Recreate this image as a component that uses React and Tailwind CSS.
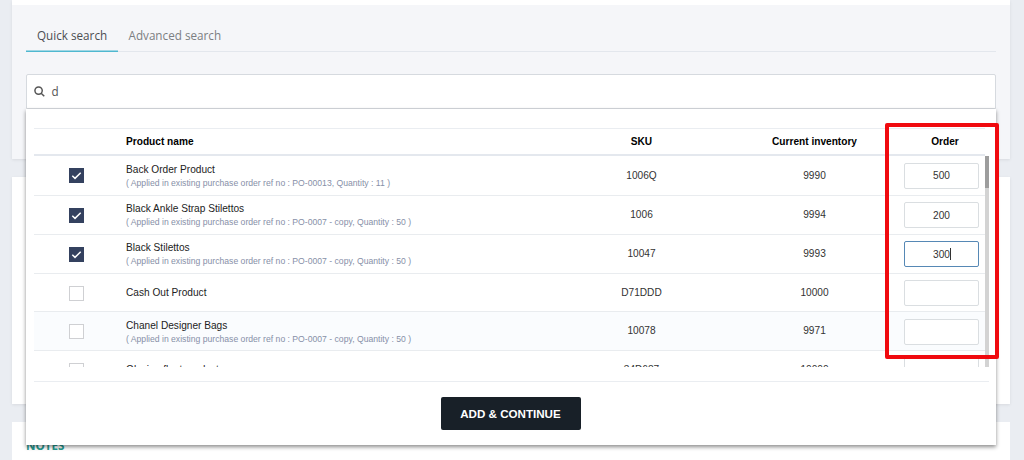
const products = [
  { name: "Back Order Product", note: "( Applied in existing purchase order ref no : PO-00013, Quantity : 11 )", sku: "1006Q", stock: "9990", order: "500", checked: true, size: "h-[39.5px]" },
  { name: "Black Ankle Strap Stilettos", note: "( Applied in existing purchase order ref no : PO-0007 - copy, Quantity : 50 )", sku: "1006", stock: "9994", order: "200", checked: true, size: "h-[39.25px]" },
  { name: "Black Stilettos", note: "( Applied in existing purchase order ref no : PO-0007 - copy, Quantity : 50 )", sku: "10047", stock: "9993", order: "300", checked: true, focused: true, size: "h-[39.25px]" },
  { name: "Cash Out Product", sku: "D71DDD", stock: "10000", order: "", size: "h-[38px]" },
  { name: "Chanel Designer Bags", note: "( Applied in existing purchase order ref no : PO-0007 - copy, Quantity : 50 )", sku: "10078", stock: "9971", order: "", tinted: true, size: "h-[39px]" },
  { name: "Glazing float product", sku: "34D687", stock: "10000", order: "", size: "h-[38px]" },
];

const columns = "grid grid-cols-[92px_429px_173px_173px_1fr]";

function Checkbox({ checked }) {
  if (!checked) return <span className="block size-[15px] border border-[#cfd0d3] bg-white" />;
  return (
    <span className="flex size-[15px] items-center justify-center bg-[#34415f]">
      <svg viewBox="0 0 15 15" className="size-[15px]" fill="none" stroke="#fff" strokeWidth="1.5">
        <path d="M3.3 7.8 6 10.4 11.7 4.7" />
      </svg>
    </span>
  );
}

function ProductRow({ item }) {
  return (
    <div className={`${columns} ${item.size} shrink-0 items-center border-b border-[#e9ecef] ${item.tinted ? "bg-[#fafcfe]" : "bg-white"}`}>
      <div className="pl-[35px] pt-px"><Checkbox checked={item.checked} /></div>
      <div className={`whitespace-nowrap ${item.note ? "pt-px" : ""}`}>
        <div className="text-[10.14px] leading-[14px] text-[#222]">{item.name}</div>
        {item.note && <div className="text-[8.64px] leading-[12px] text-[#8790a8]">{item.note}</div>}
      </div>
      <div className="text-center text-[#333]">{item.sku}</div>
      <div className="text-center text-[#333]">{item.stock}</div>
      <div className="flex justify-start pl-[3px] pt-px">
        <div className={`flex h-[26px] w-[75px] items-center justify-center rounded-[2px] border bg-white text-[#333] ${item.focused ? "border-[#5688b5]" : "border-[#dadee1]"}`}>
          {item.order}
          {item.focused && <span className="-mr-px h-[12px] w-px bg-[#333]" />}
        </div>
      </div>
    </div>
  );
}

export default function App() {
  return (
    <div className="relative h-[460px] w-[1024px] overflow-hidden bg-[#eaedf2] font-['Liberation_Sans',Arial,sans-serif] text-[10.14px]">
      <div className="flex flex-col gap-[18px] pl-[12px] pr-[14px]">
        <section className="h-[159px] border-t-[5px] border-white bg-[#f5f6f9] px-[14px] shadow-[0_1px_3px_rgba(0,0,0,0.08)]">
          <nav className="flex h-[47px] border-b border-b-[#e3e7ed] font-['Open_Sans',sans-serif] text-[11.7px] leading-[16px]">
            <span className="z-10 -mb-px w-[92px] pl-[11px] pt-[22px] text-[#4b4d51] shadow-[inset_0_-1.4px_0_#4fb8d0]">Quick search</span>
            <span className="pl-[10.5px] pt-[22px] text-[#7c7e82]">Advanced search</span>
          </nav>
          <div className="mt-[22px] flex h-[35px] items-center rounded-t-[2px] border border-[#d6dadf] bg-white pl-[7px] font-['Open_Sans',sans-serif] text-[11.7px] text-[#555]">
            <svg viewBox="0 0 12 12" className="size-[11px]" fill="none" stroke="#555" strokeWidth="1.6">
              <circle cx="5" cy="5" r="4" />
              <path d="m7.8 7.8 3.4 3.4" />
            </svg>
            <span className="pl-[6.5px]">d</span>
          </div>
        </section>
        <section className="h-[227px] bg-white shadow-[0_1px_3px_rgba(0,0,0,0.08)]" />
        <section className="h-[60px] bg-white pl-[14px] pt-[15px] font-['Open_Sans',sans-serif] text-[11.7px] font-bold leading-[16px] text-[#269b91]">NOTES</section>
      </div>

      <div className="absolute left-[26px] top-[109px] flex h-[336px] w-[970px] flex-col bg-white pl-[8px] pr-[7px] pt-[19px] shadow-[0_2px_4px_rgba(0,0,0,0.45)]">
        <div className={`${columns} mr-[4px] h-[28px] shrink-0 items-center border-b-2 border-t border-b-[#e4e8ee] border-t-[#eaedf1] font-bold text-black`}>
          <span />
          <span>Product name</span>
          <span className="text-center">SKU</span>
          <span className="text-center">Current inventory</span>
          <span className="pl-[4px] text-center">Order</span>
        </div>
        <div className="flex h-[211px] shrink-0 overflow-hidden">
          <div className="flex w-[951px] flex-col">
            {products.map((item) => <ProductRow key={item.name} item={item} />)}
          </div>
          <div className="w-[4px] bg-[#d3d3d3]"><div className="h-[32px] bg-[#9d9d9d]" /></div>
        </div>
        <div className="mt-[14px] flex justify-center border-t border-[#eaedf1] pr-[2px] pt-[15px]">
          <button className="h-[33px] w-[140px] rounded-[2px] bg-[#182028] text-[11.6px] font-bold text-white">ADD &amp; CONTINUE</button>
        </div>
      </div>

      <div className="absolute left-[885px] top-[123px] h-[236px] w-[114px] rounded-[2px] border-4 border-[#f00a0f]" />
    </div>
  );
}
